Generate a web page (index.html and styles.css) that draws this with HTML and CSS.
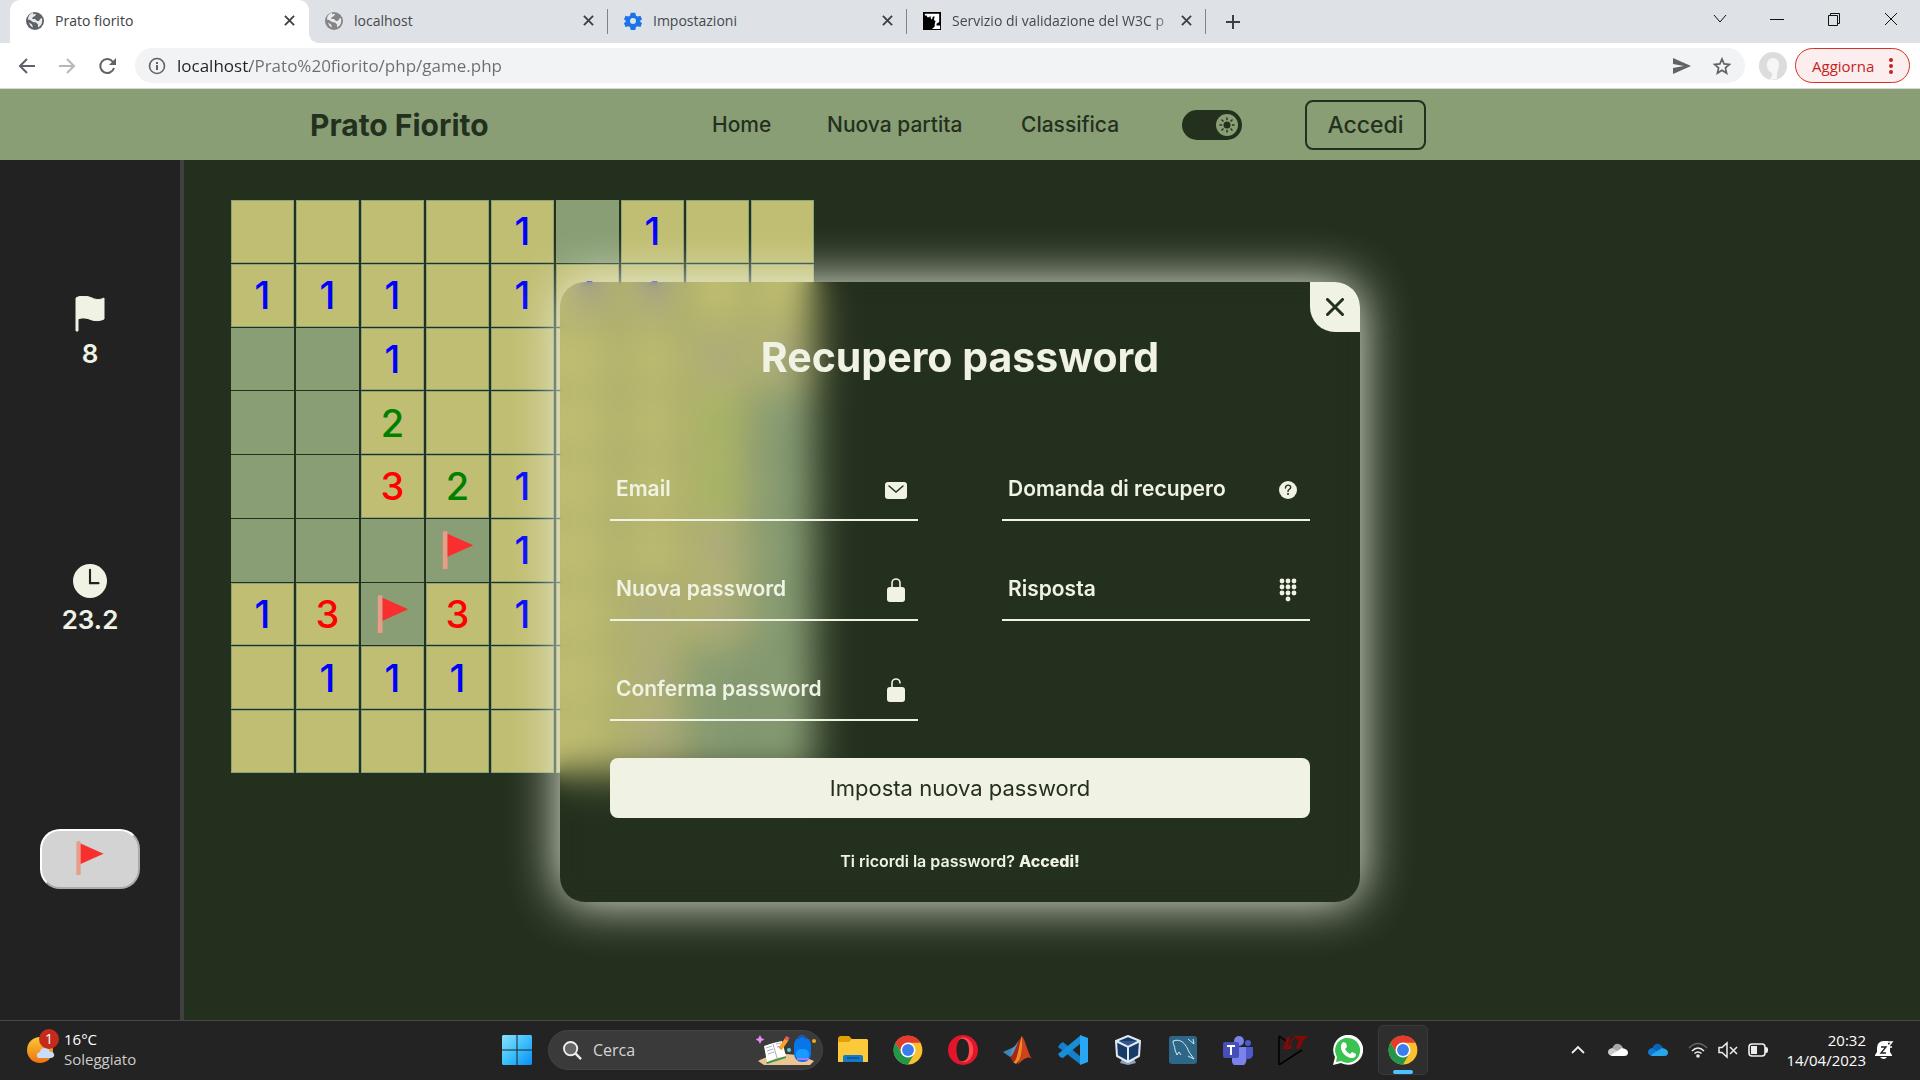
FILE: index.html
```html
<!DOCTYPE html>
<html lang="it">
<head>
<meta charset="utf-8">
<title>Prato fiorito</title>
<link rel="stylesheet" href="styles.css">
</head>
<body>
<svg class="defs" aria-hidden="true">
  <symbol id="flag" viewBox="0 0 32 40"><path fill="#e89c8a" d="M0 2q0-2 2-2h1q2 0 2 2v38H0z"/><path fill="#f92f2f" d="M5 3l27 12L5 27z"/></symbol>
  <symbol id="close" viewBox="0 0 12 12"><path d="M1 1l10 10M11 1L1 11" fill="none" stroke="currentColor" stroke-width="2"/></symbol>
  <symbol id="globe" viewBox="0 0 18 18"><circle cx="9" cy="9" r="9" fill="currentColor"/><path class="land" d="M7 2.500q2-1 3-.5l-1 2-2 1-1 2h3l2 2h2l1-2 2-1q1 5-2 8l-2 1.500v-3l-2-2-3-.5-3-2-2-.5q0-5 5-7zM3 10.500l3 2 1 3q-3-1-4-5z"/></symbol>
  <symbol id="chrome" viewBox="0 0 48 48"><circle cx="24" cy="24" r="23" fill="#fbc02d"/><path fill="#e33b2e" d="M4 12.500A23 23 0 0 1 44 12.500H24L14 30z"/><path fill="#22964a" d="M4 12.500A23 23 0 0 0 24 47L34 30H14z"/><circle cx="24" cy="24" r="12" fill="#fff"/><circle cx="24" cy="24" r="9.500" fill="#3b7ded"/></symbol>
</svg>

<header class="browser">
  <div class="tabstrip">
    <div class="tab active"><svg class="favicon globe-dark"><use href="#globe"/></svg><span class="tab-title">Prato fiorito</span><button class="tab-close" aria-label="Chiudi scheda"><svg><use href="#close"/></svg></button></div>
    <div class="tab"><svg class="favicon globe-light"><use href="#globe"/></svg><span class="tab-title">localhost</span><button class="tab-close" aria-label="Chiudi scheda"><svg><use href="#close"/></svg></button></div>
    <div class="tab"><svg class="favicon" viewBox="0 0 24 24"><path fill="#1a73e8" fill-rule="evenodd" d="M9 1h6l1 4 2 1 4-1 2 5-3 2 3 3-2 5-4-1-2 1-1 4H9l-1-4-2-1-4 1-2-5 3-3-3-2 2-5 4 1 2-1zM12 8a4 4 0 1 0 0 8 4 4 0 0 0 0-8z"/></svg><span class="tab-title">Impostazioni</span><button class="tab-close" aria-label="Chiudi scheda"><svg><use href="#close"/></svg></button></div>
    <div class="tab"><svg class="favicon" viewBox="0 0 20 20"><path d="M0 0h20v20H0z"/><path fill="#fff" d="M2 2h16v9l-3 2v2h4v4h-9l1-2-1-3 3-1 1-3-2-1 1-4h-2l-1 3H9L8 4 7 6H5L4 4H2z"/><path d="M2 6h5v4h6v6l-3 3H2z"/></svg><span class="tab-title fade">Servizio di validazione del W3C p</span><button class="tab-close" aria-label="Chiudi scheda"><svg><use href="#close"/></svg></button></div>
    <button class="new-tab" aria-label="Nuova scheda"><svg viewBox="0 0 16 16"><path d="M8 1v14M1 8h14" stroke="#3c4043" stroke-width="2"/></svg></button>
    <div class="window-controls">
      <button aria-label="Cerca schede"><svg viewBox="0 0 14 14"><path d="M1 3l6 7 6-7"/></svg></button>
      <button aria-label="Riduci"><svg viewBox="0 0 14 14"><path d="M0 7.500h14"/></svg></button>
      <button aria-label="Ripristina"><svg viewBox="0 0 14 14"><path d="M1.500 3.500h9v10h-9zM3.500 3V1.500h9v10H11"/></svg></button>
      <button aria-label="Chiudi"><svg viewBox="0 0 14 14"><path d="M1 1l12 12M13 1L1 13"/></svg></button>
    </div>
  </div>
  <div class="toolbar">
    <button class="tool" aria-label="Indietro"><svg viewBox="0 0 18 18"><path d="M17 9H2M9 2L2 9l7 7"/></svg></button>
    <button class="tool off" aria-label="Avanti"><svg viewBox="0 0 18 18"><path d="M1 9h15M9 2l7 7-7 7"/></svg></button>
    <button class="tool" aria-label="Ricarica"><svg viewBox="0 0 18 18"><path d="M15 5a7 7 0 1 0 1 6"/><path fill="#5f6368" stroke="none" d="M18 1v7h-7z"/></svg></button>
    <div class="omnibox">
      <svg class="info" viewBox="0 0 18 18"><circle cx="9" cy="9" r="7.500" fill="none" stroke="#5f6368" stroke-width="1.600"/><path d="M9 8v5M9 5v2" stroke="#5f6368" stroke-width="2"/></svg>
      <input class="url" type="text" aria-label="Indirizzo" value="localhost/Prato%20fiorito/php/game.php">
      <button aria-label="Condividi"><svg viewBox="0 0 18 16"><path fill="#5f6368" d="M0 0l18 8L0 16v-6l11-2L0 6z"/></svg></button>
      <button aria-label="Preferiti"><svg viewBox="0 0 18 18"><path fill="none" stroke="#5f6368" stroke-width="1.700" d="M9 2l2.100 4.900 5.300.5-4 3.500 1.200 5.200L9 13.300l-4.600 2.800 1.200-5.200-4-3.500 5.300-.5z"/></svg></button>
    </div>
    <svg class="avatar" viewBox="0 0 28 28"><circle cx="14" cy="14" r="14" fill="#dcdcdc"/><path fill="#f4f6f8" d="M14 6c4 0 6 3 6 7 0 5-3 7-2 14l-7 1c1-3 3-5 2-7-3-1-5-4-5-8s2-7 6-7z"/></svg>
    <button class="update">Aggiorna<svg viewBox="0 0 4 16"><circle cx="2" cy="2" r="2"/><circle cx="2" cy="8" r="2"/><circle cx="2" cy="14" r="2"/></svg></button>
  </div>
</header>

<nav class="nav">
  <a class="brand" href="#">Prato Fiorito</a>
  <a href="#">Home</a>
  <a href="#">Nuova partita</a>
  <a href="#">Classifica</a>
  <label class="theme"><input type="checkbox" checked aria-label="Tema chiaro"><svg viewBox="0 0 22 22"><circle cx="11" cy="11" r="11" fill="#899e75"/><circle cx="11" cy="11" r="3.500" fill="#24301e"/><path stroke="#24301e" stroke-width="1.500" stroke-linecap="round" d="M11 4v1.500M11 16.500V18M4 11h1.500M16.500 11H18M6 6l1 1M15 15l1 1M6 16l1-1M15 7l1-1"/></svg></label>
  <button class="login">Accedi</button>
</nav>

<main class="game">
  <aside class="side">
    <div class="stat"><svg class="stat-flag" viewBox="0 0 30 36"><path fill="#f0f3e4" d="M1 2c5-3 11-2 16 0 4 2 8 2 12 0v21c-4 2-8 2-12 1-5-2-9-3-14-1v12H1z" stroke="#f0f3e4"/></svg><span>8</span></div>
    <div class="stat"><svg class="stat-clock" viewBox="0 0 32 32"><circle cx="16" cy="16" r="16" fill="#f0f3e4"/><path d="M16 5.500V18h8" fill="none" stroke="#222" stroke-width="2" stroke-linecap="round"/></svg><span>23.2</span></div>
    <button class="flag-mode" aria-label="Modalità bandierina"><svg><use href="#flag"/></svg></button>
  </aside>
  <section class="field-area">
    <div class="board">
      <button class="open"></button><button class="open"></button><button class="open"></button><button class="open"></button><button class="open one">1</button><button></button><button class="open one">1</button><button class="open"></button><button class="open"></button>
      <button class="open one">1</button><button class="open one">1</button><button class="open one">1</button><button class="open"></button><button class="open one">1</button><button class="open one">1</button><button class="open one">1</button><button class="open"></button><button class="open"></button>
      <button></button><button></button><button class="open one">1</button><button class="open"></button><button class="open"></button><button class="open"></button><button class="open"></button><button class="open one">1</button><button class="open one">1</button>
      <button></button><button></button><button class="open two">2</button><button class="open"></button><button class="open"></button><button class="open"></button><button class="open"></button><button class="open two">2</button><button></button>
      <button></button><button></button><button class="open three">3</button><button class="open two">2</button><button class="open one">1</button><button class="open"></button><button class="open"></button><button class="open two">2</button><button></button>
      <button></button><button></button><button></button><button><svg><use href="#flag"/></svg></button><button class="open one">1</button><button class="open"></button><button class="open"></button><button class="open one">1</button><button></button>
      <button class="open one">1</button><button class="open three">3</button><button><svg><use href="#flag"/></svg></button><button class="open three">3</button><button class="open one">1</button><button class="open"></button><button class="open one">1</button><button class="open one">1</button><button></button>
      <button class="open"></button><button class="open one">1</button><button class="open one">1</button><button class="open one">1</button><button class="open"></button><button class="open"></button><button class="open one">1</button><button></button><button></button>
      <button class="open"></button><button class="open"></button><button class="open"></button><button class="open"></button><button class="open"></button><button class="open"></button><button class="open one">1</button><button></button><button></button>
    </div>
  </section>

  <div class="overlay">
    <form class="dialog">
      <div class="glass"></div>
      <div class="glass"></div>
      <button class="dismiss" type="button" aria-label="Chiudi"><svg viewBox="0 0 18 18"><path d="M1.500 1.500l15 15M16.500 1.500l-15 15" stroke="#24301e" stroke-width="3" stroke-linecap="round"/></svg></button>
      <h1>Recupero password</h1>
      <div class="inputs">
        <div class="input"><label for="email">Email</label><input id="email" type="email"><svg viewBox="0 0 24 24"><rect x="1" y="4" width="22" height="17" rx="3" fill="#f0f3e4"/><path d="M5 8l7 6 7-6" fill="none" stroke="#24301e" stroke-width="1.500" stroke-linecap="round"/></svg></div>
        <div class="input"><label for="question">Domanda di recupero</label><input id="question" type="text"><svg viewBox="0 0 24 24"><circle cx="12" cy="12" r="9" fill="#f0f3e4"/><path d="M9.500 10c0-4 5.500-3.500 5.200-.5-.2 1.800-2.700 1.900-2.700 4" fill="none" stroke="#24301e" stroke-width="1.400" stroke-linecap="round"/><circle cx="12" cy="16" r="1" fill="#24301e"/></svg></div>
        <div class="input"><label for="new-password">Nuova password</label><input id="new-password" type="password"><svg viewBox="0 0 24 24"><rect x="3" y="9" width="18" height="15" rx="3" fill="#f0f3e4"/><path d="M8 10V5a4 4 0 0 1 8 0v5" fill="none" stroke="#f0f3e4" stroke-width="1.600"/></svg></div>
        <div class="input"><label for="answer">Risposta</label><input id="answer" type="text"><svg viewBox="0 0 24 24" fill="#f0f3e4"><circle cx="6" cy="3" r="2.400"/><circle cx="12" cy="3" r="2.400"/><circle cx="18" cy="3" r="2.400"/><circle cx="6" cy="9" r="2.400"/><circle cx="12" cy="9" r="2.400"/><circle cx="18" cy="9" r="2.400"/><circle cx="6" cy="15" r="2.400"/><circle cx="12" cy="15" r="2.400"/><circle cx="18" cy="15" r="2.400"/><circle cx="12" cy="21" r="2.400"/></svg></div>
        <div class="input"><label for="confirm">Conferma password</label><input id="confirm" type="password"><svg viewBox="0 0 24 24"><rect x="3" y="9" width="18" height="15" rx="3" fill="#f0f3e4"/><path d="M8 10V5a4 4 0 0 1 8 0" fill="none" stroke="#f0f3e4" stroke-width="1.600" stroke-linecap="round"/></svg></div>
      </div>
      <button class="submit" type="submit">Imposta nuova password</button>
      <p>Ti ricordi la password? <a href="#">Accedi!</a></p>
    </form>
  </div>
</main>

<footer class="taskbar">
  <button class="weather">
    <svg viewBox="0 0 32 40"><defs><linearGradient id="sun" x2="0" y2="1"><stop stop-color="#f9c936"/><stop offset="1" stop-color="#f0720f"/></linearGradient></defs><circle cx="13" cy="22" r="13" fill="url(#sun)"/><path fill="#c9dcf8" d="M13 30h11q4-1 3-4-1-3-4-2-1-4-5-4-5 0-5 4-4 1-3 4 0 2 3 2z"/><circle cx="22" cy="11" r="10" fill="#c42b1c"/><text x="22" y="16" text-anchor="middle" fill="#fff" font-size="14">1</text></svg>
    <span>16°C<small>Soleggiato</small></span>
  </button>
  <div class="apps">
    <button class="start" aria-label="Start"><svg viewBox="0 0 30 30"><defs><linearGradient id="win" x2="1" y2="1"><stop stop-color="#8be0fd"/><stop offset=".5" stop-color="#3cc0fc"/><stop offset="1" stop-color="#0a8df5"/></linearGradient></defs><path fill="url(#win)" d="M1 0h13.500v14.500H0V1zM15.500 0H29l1 1v13.500H15.500zM0 15.500h14.500V30H1l-1-1zM15.500 15.500H30V29l-1 1H15.500z"/></svg></button>
    <label class="search">
      <svg class="lens" viewBox="0 0 20 20"><circle cx="8" cy="8" r="7" fill="#666" stroke="#eee" stroke-width="2"/><path d="M13 13l6 6" stroke="#eee" stroke-width="2.500"/></svg>
      <input type="text" placeholder="Cerca" aria-label="Cerca">
      <svg class="doodle" viewBox="0 0 60 32"><path fill="#edc591" d="M2 27q26-14 56 0l-4 4H8z"/><path fill="#e58bf5" d="M4 1l1.500 3 3 1.500-3 1.500L4 10 2.500 7l-3-1.500 3-1.500z"/><path fill="#3d9a50" d="M10 28L30 22V24L11 30z"/><path fill="#fff" d="M8 12l9-3 9-2 4 15-9 2-10 4z"/><path d="M17 10l4 14M10 14l6-2M11 17l6-2M12 20l6-2M20 10l5-1M21 13l5-1" stroke="#a9adbf" fill="none"/><path d="M24 15L31 5" stroke="#f6a22b" stroke-width="4"/><path d="M30 6l2-3" stroke="#ed5a53" stroke-width="4"/><rect x="38" y="3" width="17" height="25" rx="8" fill="#0876e8"/><path d="M42 5q4-7 8 0" fill="none" stroke="#1b56b0" stroke-width="2"/><rect x="40" y="15" width="13" height="11" rx="5" fill="#179bff"/><path d="M41 25h12" stroke="#a579ff" stroke-width="2"/><circle cx="33" cy="16" r="2" fill="#5bd1de"/><circle cx="58" cy="7" r="2" fill="#f7a815"/></svg>
    </label>
    <button class="app" aria-label="Esplora file"><svg viewBox="0 0 30 30"><path fill="#dfa008" d="M0 4q0-3 3-3h8l3 3h14v8H0z"/><path fill="#fcc93b" d="M0 7h11l3-3h15l1 1v22H0z"/><path fill="#1479c9" d="M5 27v-5q0-2 2-2h16q2 0 2 2v5z"/><path d="M9 23h12" stroke="#0b5290" stroke-width="1.500"/></svg></button>
    <button class="app" aria-label="Chrome"><svg><use href="#chrome"/></svg></button>
    <button class="app" aria-label="Opera"><svg viewBox="0 0 30 30"><path fill="#e3152a" fill-rule="evenodd" d="M15 0a15 15 0 1 0 0 30 15 15 0 0 0 0-30zM15 3c4 0 6.500 5 6.500 12S19 27 15 27 8.500 22 8.500 15 11 3 15 3z"/><path fill="#ff4b4b" d="M10 5q5-5 10-1c7 5 7 17 0 22q-5 3-9-1c4 3 10 1 10-10S15 2 10 5z"/></svg></button>
    <button class="app" aria-label="MATLAB"><svg viewBox="0 0 30 30"><path fill="#3b87b9" d="M0 17l9-4 4 4-6 5z"/><path fill="#5398c5" d="M9 13c3-1 5-5 7-8l-3 14-6 3z"/><path fill="#a52718" d="M7 22c5-3 7-16 12-21l-2 20-7 6z"/><path fill="#f08a25" d="M10 27c5 0 6-20 9-26l2 19-8 9z"/><path fill="#cf421d" d="M19 1c3 3 6 18 10 23-5-4-9 1-15 6 4-7 6-18 5-29z"/></svg></button>
    <button class="app" aria-label="Visual Studio Code"><svg viewBox="0 0 30 30"><path fill="#1580ca" d="M2 9L5 7l18 15v8L0 12z"/><path fill="#168fd8" d="M0 19L23 0v8L5 23l-3-1z"/><path fill="#2aa7f2" d="M22 0l8 3v24l-8 3z"/></svg></button>
    <button class="app" aria-label="VirtualBox"><svg viewBox="0 0 30 30"><path fill="#8c9fbd" d="M9 24h12l2 4-8 2-8-2z"/><path fill="#173a67" stroke="#e0e8f2" stroke-width="2" stroke-linejoin="round" d="M15 1l12 5-1 15-11 6-11-6L3 6z"/><path fill="#33578a" stroke="#e0e8f2" stroke-width="2" d="M3 6l12 6 12-6M15 12v15"/></svg></button>
    <button class="app" aria-label="MySQL Workbench"><svg viewBox="0 0 30 30"><rect x="1" y="1" width="28" height="28" rx="3" fill="#2d6787"/><path d="M5 6c8-3 13 3 16 11l5 7-6-3M5 6c0 4 2 5 2 9l2 5 2-3 2 3M20 4l6 5-1-5" fill="none" stroke="#d8e7ef"/></svg></button>
    <button class="app" aria-label="Teams"><svg viewBox="0 0 30 30"><circle cx="16" cy="6" r="5" fill="#7b83eb"/><circle cx="25" cy="8" r="3" fill="#5059c9"/><path fill="#5059c9" d="M20 12h10v8q-2 6-8 3z"/><path fill="#7b83eb" d="M9 12h14v10a7 7 0 0 1-14 5z"/><rect y="7" width="16" height="16" rx="2" fill="#464eb8"/><path d="M4 11h8M8 11v9" stroke="#fff" stroke-width="2"/></svg></button>
    <button class="app" aria-label="LTspice"><svg viewBox="0 0 30 30"><path d="M1 1v29l23-15M1 1l7 5" fill="none" stroke="#000" stroke-width="1.500"/><path fill="#850808" d="M9 2h3l-2 9h4l-1 3H4l2-3zM16 1h14l-2 3h-2l-4 9-4 1 4-10h-4z"/><path d="M16 3q-6 5-3 9M20 3q3 3-1 9" fill="none" stroke="#850808" stroke-width="1.500"/></svg></button>
    <button class="app" aria-label="WhatsApp"><svg viewBox="0 0 30 30"><path fill="#fff" d="M0 30l2-8a15 15 0 1 1 6 6z"/><path fill="#3bc352" d="M3 27l1-5a12.500 12.500 0 1 1 4 4z"/><path fill="#fff" d="M10 7l3 1 1 4-2 2q2 4 5 5l2-2 4 2q0 4-4 4C12 23 4 13 10 7z"/></svg></button>
    <button class="app current" aria-label="Chrome, in uso"><svg><use href="#chrome"/></svg></button>
  </div>
  <div class="tray">
    <button aria-label="Icone nascoste"><svg viewBox="0 0 20 20"><path d="M4 13l6-6 6 6" fill="none" stroke="#eee" stroke-width="1.800"/></svg></button>
    <button aria-label="Cloud"><svg viewBox="0 0 20 20"><path fill="#a8a8a8" d="M4 9q2-6 7-5 3 1 4 4l-6 5z"/><path fill="#ccc" d="M4 16q-4-1-4-4t4-4l9 5-4 3z"/><path fill="#fff" d="M3 15l11-7q6 1 6 4.500T16 16H4z"/></svg></button>
    <button aria-label="OneDrive"><svg viewBox="0 0 20 20"><path fill="#0a63b6" d="M4 9q2-6 7-5 3 1 4 4l-6 5z"/><path fill="#0f78d4" d="M4 16q-4-1-4-4t4-4l9 5-4 3z"/><path fill="#28a8ea" d="M3 15l11-7q6 1 6 4.500T16 16H4z"/></svg></button>
    <button class="status" aria-label="Rete, volume e batteria">
      <svg viewBox="0 0 20 20" fill="none" stroke="#eee" stroke-width="1.600"><path stroke="#666" d="M1 8q9-9 18 0"/><path d="M4 11q6-6 12 0M6.500 13.500q3.500-3 7 0"/><circle cx="10" cy="16" r="1"/></svg>
      <svg viewBox="0 0 20 20" fill="none" stroke="#eee" stroke-width="1.500"><path d="M1 7.500h3L9 3v14l-5-4.500H1zM12 7l7 7M19 7l-7 7"/></svg>
      <svg viewBox="0 0 20 20" fill="none" stroke="#eee" stroke-width="1.600"><rect x="1" y="4" width="16" height="12" rx="3"/><path fill="#eee" stroke="none" d="M3 6h6v8H3zM17 7h1q2 0 2 2v2q0 2-2 2h-1z"/></svg>
    </button>
    <button class="clock"><span>20:32</span><span>14/04/2023</span></button>
    <button class="bell" aria-label="Notifiche"><svg viewBox="0 0 20 20"><path fill="#fff" d="M1 15l2-3V8q0-6 6-7h5v3l2 2v6l2 3v1H1zM6 17h7q-3 4-7 0z"/><path d="M7 7h5l-5 6h5" fill="none" stroke="#222" stroke-width="1.400"/><path d="M14 2h4l-4 5h4" fill="none" stroke="#fff" stroke-width="1.400"/></svg></button>
  </div>
</footer>
</body>
</html>
```
FILE: styles.css
```css
:root {
  --cream: #f0f3e4;
  --forest: #24301e;
  --sage: #899e75;
  --straw: #c0be72;
  --ui: "Open Sans", "Noto Sans", sans-serif;
}

* { box-sizing: border-box; }

body {
  margin: 0;
  min-height: 100vh;
  display: flex;
  flex-direction: column;
  background: var(--forest);
  font-family: Inter, "Open Sans", sans-serif;
}

button {
  margin: 0;
  padding: 0;
  border: 0;
  background: none;
  color: inherit;
  font: inherit;
  display: flex;
  align-items: center;
  justify-content: center;
}

input { font: inherit; border: 0; padding: 0; background: none; min-width: 0; outline: 0; }
a { color: inherit; text-decoration: none; }
.defs { display: none; }

/* Browser window */
.browser { font-family: var(--ui); background: #fff; border-bottom: 1px solid #d5d7da; }

.tabstrip { display: flex; height: 43px; padding-left: 10px; background: #dee1e6; }
.tab { display: flex; align-items: center; width: 299px; padding: 0 13px 2px 16px; gap: 11px; color: #45494d; font-size: 14px; position: relative; }
.tab.active { background: #fff; border-radius: 10px 10px 0 0; color: #3c4043; }
.tab.active::after { content: ""; position: absolute; left: 100%; bottom: 0; width: 10px; height: 10px; background: radial-gradient(circle at 100% 0, #dee1e6 10px, #fff 10px); }
.tab:not(.active)::after { content: ""; position: absolute; right: 0; top: 9px; width: 1px; height: 25px; background: #808387; }
.favicon { width: 18px; height: 18px; flex: none; }
.globe-dark { color: #5f6368; }
.globe-light { color: #858585; }
.land { fill: #e8eaed; }
.tab-title { flex: 1; margin-top: -1px; white-space: nowrap; overflow: hidden; margin-right: -8px; }
.fade { -webkit-mask-image: linear-gradient(90deg, #000 90%, transparent); mask-image: linear-gradient(90deg, #000 90%, transparent); }
.tab-close { width: 14px; height: 20px; color: #3c4043; }
.tab-close svg { width: 11px; height: 11px; }
.new-tab { width: 54px; height: 43px; }
.new-tab svg { width: 16px; height: 16px; }
.window-controls { display: flex; margin-left: auto; padding-right: 1px; }
.window-controls button { width: 57px; height: 37px; }
.window-controls svg { width: 14px; height: 14px; fill: none; stroke: #111; }

.toolbar { display: flex; align-items: center; height: 45px; padding: 0 10px 0 7px; }
.tool { width: 40px; height: 36px; }
.tool svg { width: 18px; height: 18px; fill: none; stroke: #5f6368; stroke-width: 2; }
.off { opacity: .45; }
.omnibox { flex: 1; display: flex; align-items: center; height: 35px; margin-left: 8px; padding: 0 3px 0 13px; border-radius: 18px; background: #f1f3f4; }
.info { width: 18px; height: 18px; }
.url { flex: 1; margin-left: 11px; font-size: 17px; color: transparent; background: linear-gradient(90deg, #202124 73px, #6a6e73 73px); -webkit-background-clip: text; background-clip: text; }
.omnibox button { width: 40px; height: 34px; }
.omnibox button svg { width: 18px; height: 18px; }
.avatar { width: 28px; height: 28px; margin: 0 8px 0 14px; }
.update { width: 115px; height: 35px; justify-content: space-between; padding: 0 16px; border: 1px solid #d93025; border-radius: 18px; background: #fceeee; color: #c5221f; font-size: 15px; }
.update svg { width: 4px; height: 16px; fill: #c5221f; }

/* Site navigation */
.nav {
  display: grid;
  grid-template-columns: 310fr 402fr 115fr 194fr 161fr 123fr 121fr 494fr;
  align-items: center;
  height: 71px;
  background: var(--sage);
  color: var(--forest);
  font-size: 21px;
  font-weight: 500;
  white-space: nowrap;
}
.brand { grid-column: 2; font-size: 30px; font-weight: 700; }
.theme { display: flex; align-items: center; justify-content: flex-end; width: 60px; height: 30px; padding-right: 4px; border-radius: 15px; background: var(--forest); }
.theme input { position: absolute; opacity: 0; }
.theme svg { width: 22px; height: 22px; }
.login { height: 50px; border: 2px solid var(--forest); border-radius: 8px; font-size: 23px; }

/* Game */
.game { flex: 1; display: flex; position: relative; }
.side { display: flex; flex-direction: column; align-items: center; justify-content: space-between; width: 184px; padding: 136px 0 131px; border-right: 4px solid #404040; background: #222; }
.stat { display: flex; flex-direction: column; align-items: center; gap: 6px; color: var(--cream); font-size: 26px; line-height: 32px; font-weight: 600; }
.stat-flag { width: 32px; height: 36px; }
.stat-clock { width: 34px; height: 34px; }
.flag-mode { width: 100px; height: 60px; border: 2px outset #fff; border-radius: 20px; background: #d3d3d3; padding-bottom: 2px; }
.flag-mode svg { width: 28px; height: 34px; }

.field-area { padding: 40px 47px; }
.board { display: grid; grid-template-columns: repeat(9, 63px); grid-template-rows: repeat(9, 1fr); height: 573px; gap: 1px 2px; }
.board button { background: var(--sage); font-size: 38px; font-weight: 500; }
.board .open { background: var(--straw); border: 1px solid #8ca278; }
.board svg { width: 32px; height: 38px; }
.one { color: #00f; }
.two { color: #008000; }
.three { color: #f00; }

/* Password dialog */
.overlay { position: absolute; inset: 0; display: flex; align-items: center; justify-content: center; padding-top: 4px; }
.dialog { position: relative; z-index: 0; width: 800px; padding: 48px 50px 25px; border-radius: 25px; color: var(--cream); }
.dialog::after { content: ""; position: absolute; inset: 0; border-radius: 25px; box-shadow: 0 0 50px var(--cream); pointer-events: none; }
.glass { position: absolute; inset: 0; z-index: -1; }
.glass::before, .glass::after { content: ""; position: absolute; inset: 0; border-radius: 25px; -webkit-backdrop-filter: blur(10px); backdrop-filter: blur(10px); }
.dismiss { position: absolute; top: 0; right: 0; width: 50px; height: 50px; border-radius: 0 25px; background: var(--cream); }
.dismiss svg { width: 18px; height: 18px; }
.dialog h1 { margin: 0 0 77px; text-align: center; font-size: 41px; line-height: 54px; font-weight: 700; }
.inputs { display: grid; grid-template-columns: 308fr 308fr; gap: 40px 84px; }
.input { display: grid; grid-template-columns: 1fr 44px; align-items: center; height: 60px; border-bottom: 2px solid var(--cream); font-size: 21px; font-weight: 600; }
.input > * { grid-row: 1; }
.input label { grid-column: 1; padding: 0 0 4px 6px; white-space: nowrap; }
.input input { grid-column: 1 / -1; grid-row: 1; width: 100%; height: 58px; color: inherit; }
.input svg { grid-column: 2; justify-self: center; width: 24px; height: 24px; }
.submit { width: 100%; height: 60px; margin-top: 37px; border-radius: 8px; background: var(--cream); color: var(--forest); font-size: 22px; font-weight: 400; }
.dialog p { margin: 28px 0 0; text-align: center; font-size: 16px; line-height: 31px; font-weight: 600; }
.dialog p a { font-weight: 800; }

/* Taskbar */
.taskbar { display: grid; grid-template-columns: 1fr auto 1fr; align-items: center; height: 60px; border-top: 1px solid #464646; background: #232323; color: #fff; font-family: var(--ui); font-size: 15px; }
.weather { justify-self: start; gap: 5px; padding: 0 0 4px 27px; line-height: 20px; text-align: left; }
.weather svg { width: 32px; height: 40px; margin-bottom: 2px; }
.weather small { display: block; font-size: 15px; color: #ccc; }
.apps { display: flex; align-items: center; gap: 5px; padding-bottom: 1px; }
.start { width: 50px; height: 50px; }
.start svg, .app svg { width: 30px; height: 30px; }
.search { display: flex; align-items: center; width: 275px; height: 40px; padding: 0 6px 0 14px; margin-left: 1px; border: 1px solid #444; border-radius: 20px; background: #3a3a3a; font-size: 16px; }
.search input { flex: 1; margin-left: 11px; color: #fff; }
.search input::placeholder { color: #d5d5d5; opacity: 1; }
.lens { width: 19px; height: 19px; }
.doodle { width: 60px; height: 32px; }
.app { position: relative; width: 50px; height: 50px; border-radius: 5px; }
.current { background: #2e2e2e; border: 1px solid #393939; }
.current::after { content: ""; position: absolute; bottom: 0; width: 20px; height: 4px; border-radius: 2px; background: #4cc2ff; }
.tray { display: flex; align-items: center; justify-self: end; padding: 0 19px 2px 0; }
.tray svg { width: 20px; height: 20px; }
.tray > button { width: 40px; height: 40px; }
.tray .status { width: auto; gap: 10px; padding: 0 10px; }
.tray .clock { width: 88px; flex-direction: column; align-items: flex-end; line-height: 20px; }
.tray .bell { width: 35px; }
```
